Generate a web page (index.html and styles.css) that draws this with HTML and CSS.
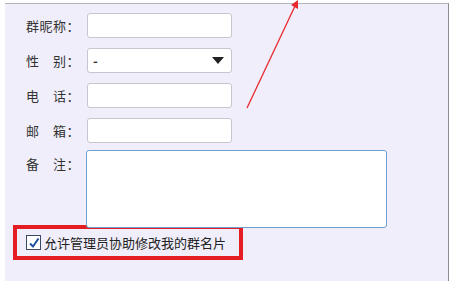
FILE: index.html
```html
<!DOCTYPE html>
<html lang="zh-CN">
<head>
  <meta charset="UTF-8" />
  <title>群名片</title>
  <link rel="stylesheet" href="styles.css">
</head>
<body>
  <div class="panel">
    <div class="form">
      <div class="row">
        <span class="label">群昵称：</span>
        <input class="field" type="text" />
      </div>
      <div class="row">
        <span class="label">性　别：</span>
        <div class="field select">
          <span>-</span>
          <svg width="12" height="7" viewBox="0 0 12 7"><path d="M0 0 H12 L6 7 Z" fill="#222"/></svg>
        </div>
      </div>
      <div class="row">
        <span class="label">电　话：</span>
        <input class="field" type="text" />
      </div>
      <div class="row">
        <span class="label">邮　箱：</span>
        <input class="field" type="text" />
      </div>
      <div class="row memo-row">
        <span class="label">备　注：</span>
        <textarea class="memo"></textarea>
      </div>
    </div>

    <!-- 允许修改 -->
    <div class="allow">
      <span class="check">
        <svg width="12" height="12" viewBox="0 0 12 12"><path d="M2 6.5 L5 9.5 L10.5 1.5" fill="none" stroke="#1f4fa0" stroke-width="2"/></svg>
      </span>
      <span>允许管理员协助修改我的群名片</span>
    </div>

    <svg class="arrow" width="60" height="112" viewBox="0 0 60 112">
      <line x1="7" y1="108" x2="55" y2="6" stroke="#e8282c" stroke-width="1.3"/>
      <path d="M51 5 L58 0 L58 9 Z" fill="#e8282c"/>
    </svg>
  </div>
</body>
</html>
```

FILE: styles.css
```css
body { margin: 0; background: #ffffff; font-family: "Noto Sans CJK SC", "Microsoft YaHei", sans-serif; font-size: 13px; color: #333; }
.panel { position: relative; margin: 3px 0 0 5px; width: 444px; height: 278px; background: #f0eefa; border-top: 1px solid #b4b4bc; border-right: 1px solid #8c8c94; box-sizing: border-box; }
.form { padding: 9px 0 0 21px; }
.row { display: flex; align-items: center; height: 25px; margin-bottom: 10px; }
.label { width: 61px; white-space: nowrap; letter-spacing: 0.5px; }
.field { width: 145px; height: 25px; box-sizing: border-box; border: 1px solid #c6c6ce; border-radius: 3px; background: #fff; margin: 0; padding: 0 5px; font: inherit; }
.select { display: flex; align-items: center; justify-content: space-between; padding: 0 7px 0 5px; }
.select span { font-weight: bold; }
.memo-row { align-items: flex-start; height: 78px; margin: -3px 0 0 0; }
.memo-row .label { padding-top: 4px; }
.memo { width: 301px; height: 78px; margin: 0 0 0 -1px; box-sizing: border-box; border: 1.5px solid #6f9fce; border-radius: 3px; background: #fff; resize: none; }
.allow { display: flex; align-items: center; gap: 3px; margin: -3px 0 0 8px; width: 230px; height: 35px; box-sizing: border-box; border: 4px solid #e41d24; padding-left: 9px; font-size: 13px; color: #222; }
.check { display: flex; align-items: center; justify-content: center; width: 13px; height: 13px; border: 1px solid #3a4a66; background: #fff; }
.arrow { position: absolute; left: 235px; top: -4px; }
```
